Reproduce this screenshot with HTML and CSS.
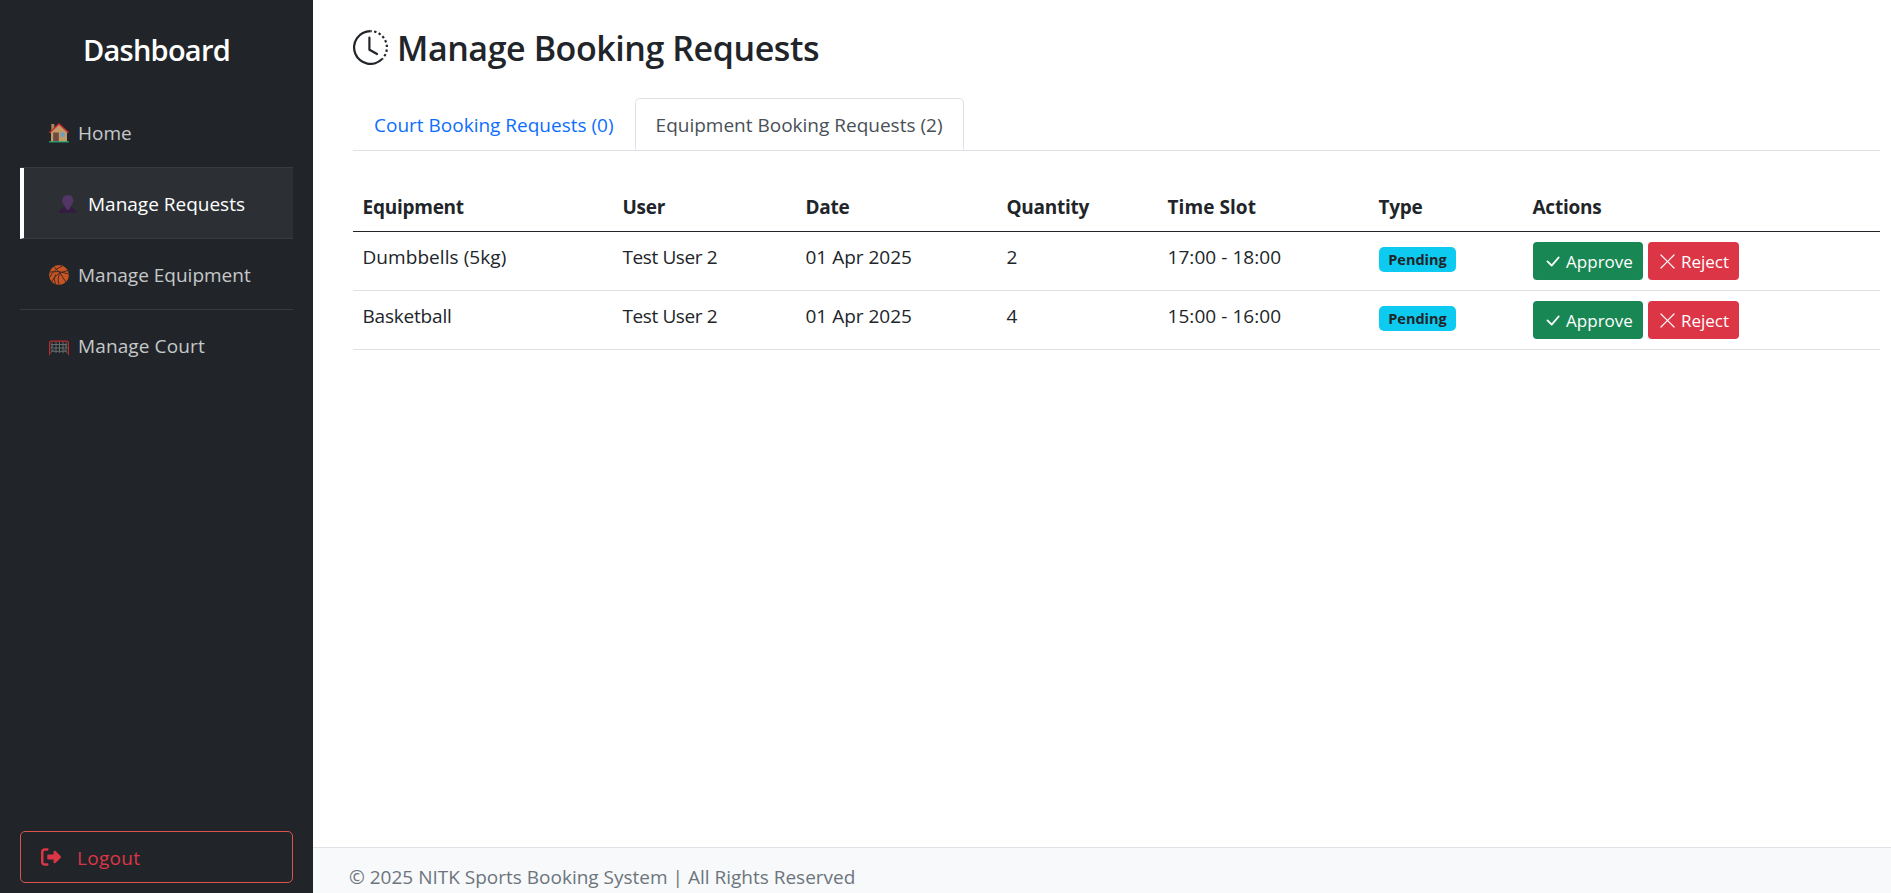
FILE: index.html
```html
<!DOCTYPE html>
<html lang="en">
<head>
<meta charset="utf-8">
<title>Manage Booking Requests</title>
<link rel="stylesheet" href="styles.css">
</head>
<body>
<svg class="sprite" aria-hidden="true">
  <symbol id="check" viewBox="0 0 16 16"><path d="M12.736 3.97a.733.733 0 0 1 1.047 0c.286.289.29.756.01 1.05L7.88 12.01a.733.733 0 0 1-1.065.02L3.217 8.384a.757.757 0 0 1 0-1.06.733.733 0 0 1 1.047 0l3.052 3.093 5.4-6.425z"/></symbol>
  <symbol id="cross" viewBox="0 0 16 16"><path d="M2.146 2.854a.5.5 0 1 1 .708-.708L8 7.293l5.146-5.147a.5.5 0 0 1 .708.708L8.707 8l5.147 5.146a.5.5 0 0 1-.708.708L8 8.707l-5.146 5.147a.5.5 0 0 1-.708-.708L7.293 8z"/></symbol>
</svg>
<div class="layout">
  <aside class="sidebar">
    <h3 class="brand"><span>Dashboard</span></h3>
    <nav class="menu">
      <a class="item"><svg class="emoji" viewBox="0 0 20 20"><path d="M2.3 1h3v6h-3z" fill="#a98558"/><path d="M2 8.5 10 1.3 18 8.500V19H2z" fill="#c19a67"/><path d="M4.200 9.500h5.600V19H4.200z" fill="#704a40"/><path d="M11.500 9.500h4.200v4.300h-4.200z" fill="#6a9fc5"/><path d="M.5 9.800 10 1l9.500 8.800" fill="none" stroke="#c92e31" stroke-width="1.500"/><path d="M0 18.200h20v1.200H0z" fill="#24ad79"/></svg><span>Home</span></a>
      <a class="item active"><svg class="emoji" viewBox="0 0 20 20"><path d="M0 19q.2-4.500 4.500-5.500h8Q17.300 14.500 17.500 19z" fill="#321d40"/><path d="M3.600 6Q3.500 1 8.800 1t5.200 5q.9.600.3 2.400l-.8.900Q12.500 12 11 13v1.500L8.800 16.300l-2.400-2V13Q4.700 11.600 4.100 9.300l-.8-.9Q2.700 6.600 3.600 6z" fill="#533566"/></svg><span>Manage Requests</span></a>
      <a class="item"><svg class="emoji" viewBox="0 0 20 20"><circle cx="10" cy="10" r="9.900" fill="#c85422"/><g fill="none" stroke="#422b25" stroke-width="1"><path d="M5 1.500Q12 8 16.800 17M1 12Q4 5 13.500.8M.5 7Q10 5 19.500 9M3 16.500Q6 8 19 5.500M10 19.800Q7.500 12 12 7M6.500 19Q4 14 6.500 9.500"/></g></svg><span>Manage Equipment</span></a>
      <a class="item last"><svg class="emoji" viewBox="0 0 20 20"><g fill="none" stroke="#74787b" stroke-width=".8"><path d="M3 6.500v9.500M7 6v11M10.500 6v11M14 6v11M17 6.500v9.500M2 8.500h16M4 12h12M4 15.300h12M1.500 12.500 4 9.500M1.500 17 5 13.500M18.500 12.500 16 9.500M18.500 17 15 13.500"/></g><path d="M.6 19V7Q.6 5.200 2.500 5.200h15q1.900 0 1.900 1.800V19" fill="none" stroke="#bd2b2f" stroke-width="1.200"/></svg><span class="court">Manage Court</span></a>
    </nav>
    <a class="logout"><svg viewBox="0 0 512 512"><path d="M377.900 105.900L500.700 228.700c7.200 7.200 11.300 17.100 11.300 27.300s-4.100 20.100-11.300 27.300L377.900 406.100c-6.400 6.400-15 9.900-24 9.900c-18.700 0-33.900-15.200-33.900-33.900l0-62.100-128 0c-17.700 0-32-14.300-32-32l0-64c0-17.700 14.300-32 32-32l128 0 0-62.100c0-18.700 15.200-33.900 33.900-33.900c9 0 17.600 3.600 24 9.900zM160 96L96 96c-17.700 0-32 14.300-32 32l0 256c0 17.700 14.300 32 32 32l64 0c17.700 0 32 14.300 32 32s-14.300 32-32 32l-64 0c-53 0-96-43-96-96L0 128C0 75 43 32 96 32l64 0c17.700 0 32 14.300 32 32s-14.300 32-32 32z"/></svg><span>Logout</span></a>
  </aside>
  <div class="page">
    <main class="content">
      <h2 class="title"><svg viewBox="0 0 16 16"><path d="M8.515 1.019A7 7 0 0 0 8 1V0a8 8 0 0 1 .589.022zm2.004.45a7 7 0 0 0-.985-.299l.219-.976q.576.129 1.126.342zm1.370.71a7 7 0 0 0-.439-.27l.493-.87a8 8 0 0 1 .979.654l-.615.789a7 7 0 0 0-.418-.302zm1.834 1.790a7 7 0 0 0-.653-.796l.724-.69q.406.429.747.91zm.744 1.352a7 7 0 0 0-.214-.468l.893-.45a8 8 0 0 1 .45 1.088l-.95.313a7 7 0 0 0-.179-.483m.53 2.507a7 7 0 0 0-.1-1.025l.985-.17q.1.580.116 1.170zm-.131 1.538q.05-.254.081-.51l.993.123a8 8 0 0 1-.23 1.155l-.964-.267q.069-.247.12-.501m-.952 2.379q.276-.436.486-.908l.914.405q-.24.540-.555 1.038zm-.964 1.205q.183-.183.350-.378l.758.653a8 8 0 0 1-.401.432z"/><path d="M8 1a7 7 0 1 0 4.950 11.950l.707.707A8.001 8.001 0 1 1 8 0z"/><path d="M7.500 3a.5.5 0 0 1 .5.5v5.210l3.248 1.856a.5.5 0 0 1-.496.868l-3.500-2A.5.5 0 0 1 7 9V3.500a.5.5 0 0 1 .5-.5"/></svg><span>Manage Booking Requests</span></h2>
      <div class="tabs">
        <a class="tab"><span>Court Booking Requests (0)</span></a>
        <a class="tab selected"><span>Equipment Booking Requests (2)</span></a>
      </div>
      <div class="table">
        <div class="row head"><b>Equipment</b><b>User</b><b>Date</b><b>Quantity</b><b class="wide">Time Slot</b><b>Type</b><b>Actions</b></div>
        <div class="row">
          <span class="wide">Dumbbells (5kg)</span><span class="user">Test User 2</span><span>01 Apr 2025</span><span>2</span><span class="wide">17:00 - 18:00</span>
          <div class="type"><span class="badge">Pending</span></div>
          <div class="actions"><button class="btn approve"><svg><use href="#check"/></svg>Approve</button><button class="btn reject"><svg><use href="#cross"/></svg>Reject</button></div>
        </div>
        <div class="row">
          <span class="name">Basketball</span><span class="user">Test User 2</span><span>01 Apr 2025</span><span>4</span><span class="wide">15:00 - 16:00</span>
          <div class="type"><span class="badge">Pending</span></div>
          <div class="actions"><button class="btn approve"><svg><use href="#check"/></svg>Approve</button><button class="btn reject"><svg><use href="#cross"/></svg>Reject</button></div>
        </div>
      </div>
    </main>
    <footer class="footer"><span>© 2025 NITK Sports Booking System | All Rights Reserved</span></footer>
  </div>
</div>
</body>
</html>
```
FILE: styles.css
```css
* { box-sizing: border-box; }
body {
  margin: 0;
  font-family: "Open Sans", "Noto Sans", sans-serif;
  font-size: 19px;
  line-height: 30px;
  color: #212529;
  background: #fff;
}
svg { flex: none; fill: currentColor; }
.sprite { display: none; }
.layout { display: flex; height: 893px; overflow: hidden; white-space: nowrap; }

.sidebar {
  display: flex;
  flex-direction: column;
  flex: none;
  width: 313px;
  padding: 30px 20px 10px;
  background: #212529;
}
.brand {
  margin: 0 0 30px;
  height: 37px;
  line-height: 39px;
  font-size: 29px;
  font-weight: 600;
  color: #fff;
  text-align: center;
  letter-spacing: -.75px;
}
.menu { display: flex; flex-direction: column; }
.item {
  display: flex;
  align-items: center;
  gap: 9px;
  height: 71px;
  padding: 2px 0 0 29px;
  border-bottom: 1px solid #373b3e;
  color: #c6c8ca;
}
.item.active {
  padding-left: 35px;
  border-left: 4px solid #fff;
  background: #2c3034;
  color: #fff;
}
.item.last { border-bottom-color: transparent; }
.item .court { letter-spacing: .12px; }
.emoji { width: 20px; height: 20px; }
.logout {
  display: flex;
  align-items: center;
  gap: 16px;
  height: 52px;
  margin-top: auto;
  padding-left: 20px;
  border: 1px solid #d9534f;
  border-radius: 5px;
  color: #dc3545;
}
.logout svg { width: 20px; height: 20px; }
.logout span { letter-spacing: .3px; padding-top: 1px; }

.page { display: flex; flex-direction: column; flex: 1; min-width: 0; }
.content { flex: 1; padding: 26px 11px 0 40px; }
.title {
  display: flex;
  align-items: center;
  gap: 9px;
  height: 44px;
  margin: 0 0 28px;
  font-size: 34px;
  font-weight: 600;
  letter-spacing: -.43px;
}
.title svg { width: 35px; height: 35px; margin-top: -1px; }
.tabs { display: flex; height: 53px; border-bottom: 1px solid #dee2e6; }
.tab {
  height: 52px;
  padding: 11px 20px 0;
  border: 1px solid transparent;
  border-bottom: 0;
  border-radius: 5px 5px 0 0;
  color: #0d6efd;
}
.tab.selected { border-color: #dee2e6; color: #495057; }

.table { margin-top: 30px; }
.row {
  display: grid;
  grid-template-columns: 260px 183px 201px 161px 211px 154px 1fr;
  height: 59px;
  border-bottom: 1px solid #dee2e6;
}
.row > * { padding: 10px 10px 0 9.500px; }
.row.head { height: 51px; border-bottom-color: #212529; }
.row.head > * { padding-top: 11px; letter-spacing: -.25px; }
.row > .wide { letter-spacing: .06px; }
.row > .user { letter-spacing: -.4px; }
.row > .name { letter-spacing: -.2px; }
.row .type { padding: 15px 10px 0; }
.badge {
  display: block;
  width: 77px;
  height: 25px;
  border-radius: 5px;
  background: #0dcaf0;
  font-size: 14.500px;
  font-weight: 700;
  line-height: 25px;
  text-align: center;
}
.row .actions { display: flex; gap: 5px; padding-left: 10px; }
.btn {
  display: flex;
  align-items: center;
  justify-content: center;
  gap: 4px;
  height: 38px;
  padding: 1px 0 0;
  border: 0;
  border-radius: 4px;
  color: #fff;
  font: 17px/34px "Open Sans", "Noto Sans", sans-serif;
}
.btn svg { width: 19px; height: 19px; }
.approve { width: 110px; background: #198754; }
.reject { width: 91px; background: #dc3545; }

.footer {
  height: 46px;
  padding: 14px 36px 0;
  border-top: 1px solid #dee2e6;
  background: #f8f9fa;
  color: #6c757d;
}
```
